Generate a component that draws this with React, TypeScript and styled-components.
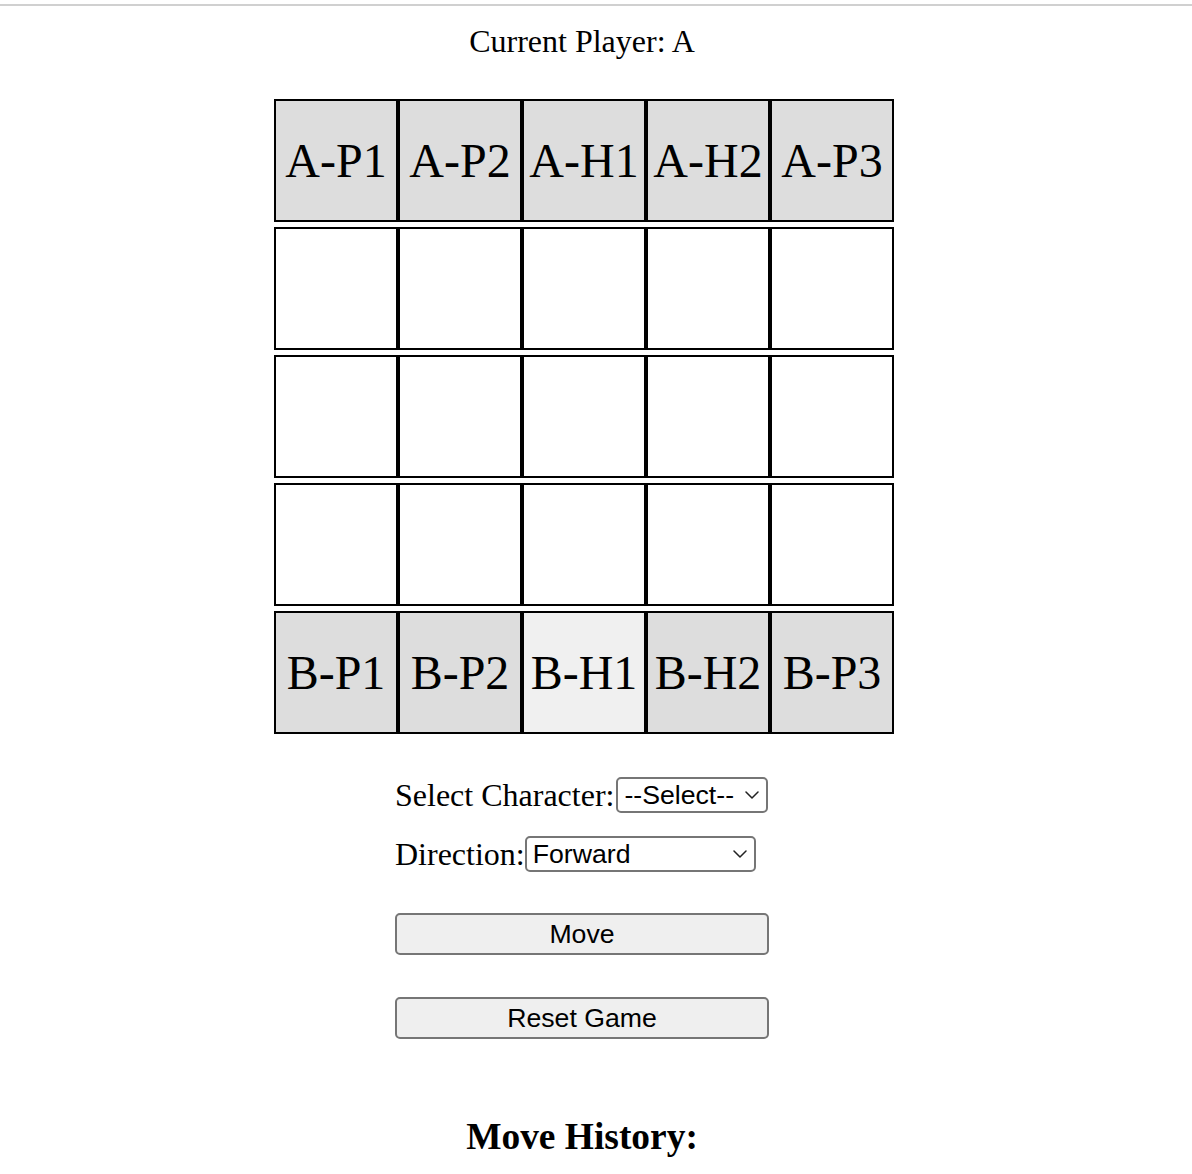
import React from "react";
import styled, { createGlobalStyle } from "styled-components";

const GlobalStyle = createGlobalStyle`
  html, body {
    margin: 0;
    padding: 0;
    background: #ffffff;
  }
  body {
    font-family: "Liberation Serif", "Times New Roman", serif;
    color: #000000;
  }
`;

const TopRule = styled.div`
  margin-top: 4px;
  height: 2px;
  background: #d0d0d0;
`;

const Page = styled.main`
  width: 1164px;
  display: flex;
  flex-direction: column;
  align-items: center;
`;

const Status = styled.p`
  margin: 17px 0 0;
  font-size: 32px;
  line-height: 37px;
`;

const Board = styled.div`
  margin: 39px 0 0 4px;
  display: grid;
  grid-template-columns: repeat(5, 124px);
  row-gap: 5px;
`;

type Tone = "piece" | "active" | "empty";

const toneColor: Record<Tone, string> = {
  piece: "#dddddd",
  active: "#f0f0f0",
  empty: "#ffffff",
};

const Cell = styled.div<{ $tone: Tone }>`
  box-sizing: border-box;
  height: 123px;
  border: 2px solid #000000;
  background: ${(p) => toneColor[p.$tone]};
  display: flex;
  align-items: center;
  justify-content: center;
  font-size: 48px;
  line-height: normal;
`;

const Controls = styled.div`
  margin-top: 43px;
  width: 374px;
  display: flex;
  flex-direction: column;
`;

const Field = styled.div<{ $gap?: number }>`
  margin-top: ${(p) => p.$gap ?? 0}px;
  height: 36px;
  display: flex;
  align-items: center;
`;

const Label = styled.label`
  font-size: 32px;
  line-height: 37px;
  white-space: nowrap;
`;

const SelectWrap = styled.div<{ $width: number; $offset?: number }>`
  position: relative;
  margin-left: ${(p) => p.$offset ?? 0}px;
  width: ${(p) => p.$width}px;
  height: 36px;
`;

const Select = styled.select`
  appearance: none;
  -webkit-appearance: none;
  box-sizing: border-box;
  width: 100%;
  height: 100%;
  margin: 0;
  padding: 0 30px 0 6px;
  border: 2px solid #767676;
  border-radius: 5px;
  background: #ffffff;
  color: #000000;
  font-family: "Liberation Sans", Arial, sans-serif;
  font-size: 26.67px;
  outline: none;
`;

const Chevron = styled.svg`
  position: absolute;
  right: 9px;
  top: 50%;
  margin-top: -4px;
  width: 14px;
  height: 8px;
  pointer-events: none;
`;

const ActionButton = styled.button<{ $gap: number }>`
  margin-top: ${(p) => p.$gap}px;
  box-sizing: border-box;
  width: 100%;
  height: 42px;
  padding: 0;
  border: 2px solid #767676;
  border-radius: 5px;
  background: #efefef;
  color: #000000;
  font-family: "Liberation Sans", Arial, sans-serif;
  font-size: 26.67px;
`;

const History = styled.h3`
  margin: 76px 0 0;
  font-size: 37.44px;
  line-height: 43px;
  font-weight: bold;
`;

const ChevronIcon = () => (
  <Chevron viewBox="0 0 14 8">
    <polyline
      points="1,1 7,7 13,1"
      fill="none"
      stroke="#222"
      strokeWidth="1.5"
      strokeLinecap="round"
      strokeLinejoin="round"
    />
  </Chevron>
);

const rows: (string | null)[][] = [
  ["A-P1", "A-P2", "A-H1", "A-H2", "A-P3"],
  [null, null, null, null, null],
  [null, null, null, null, null],
  [null, null, null, null, null],
  ["B-P1", "B-P2", "B-H1", "B-H2", "B-P3"],
];

export default function App() {
  return (
    <>
      <GlobalStyle />
      <TopRule />
      <Page>
        <Status>Current Player: A</Status>
        <Board>
          {rows.map((row, r) =>
            row.map((name, c) => (
              <Cell
                key={`${r}-${c}`}
                $tone={name === "B-H1" ? "active" : name ? "piece" : "empty"}
              >
                {name}
              </Cell>
            ))
          )}
        </Board>
        <Controls>
          <Field>
            <Label htmlFor="character">Select Character:</Label>
            <SelectWrap $width={152} $offset={2}>
              <Select id="character" defaultValue="">
                <option value="">--Select--</option>
                <option value="P1">A-P1</option>
                <option value="P2">A-P2</option>
                <option value="H1">A-H1</option>
                <option value="H2">A-H2</option>
                <option value="P3">A-P3</option>
              </Select>
              <ChevronIcon />
            </SelectWrap>
          </Field>
          <Field $gap={23}>
            <Label htmlFor="direction">Direction:</Label>
            <SelectWrap $width={231}>
              <Select id="direction" defaultValue="F">
                <option value="F">Forward</option>
                <option value="B">Backward</option>
                <option value="L">Left</option>
                <option value="R">Right</option>
              </Select>
              <ChevronIcon />
            </SelectWrap>
          </Field>
          <ActionButton $gap={41}>Move</ActionButton>
          <ActionButton $gap={42}>Reset Game</ActionButton>
        </Controls>
        <History>Move History:</History>
      </Page>
    </>
  );
}
